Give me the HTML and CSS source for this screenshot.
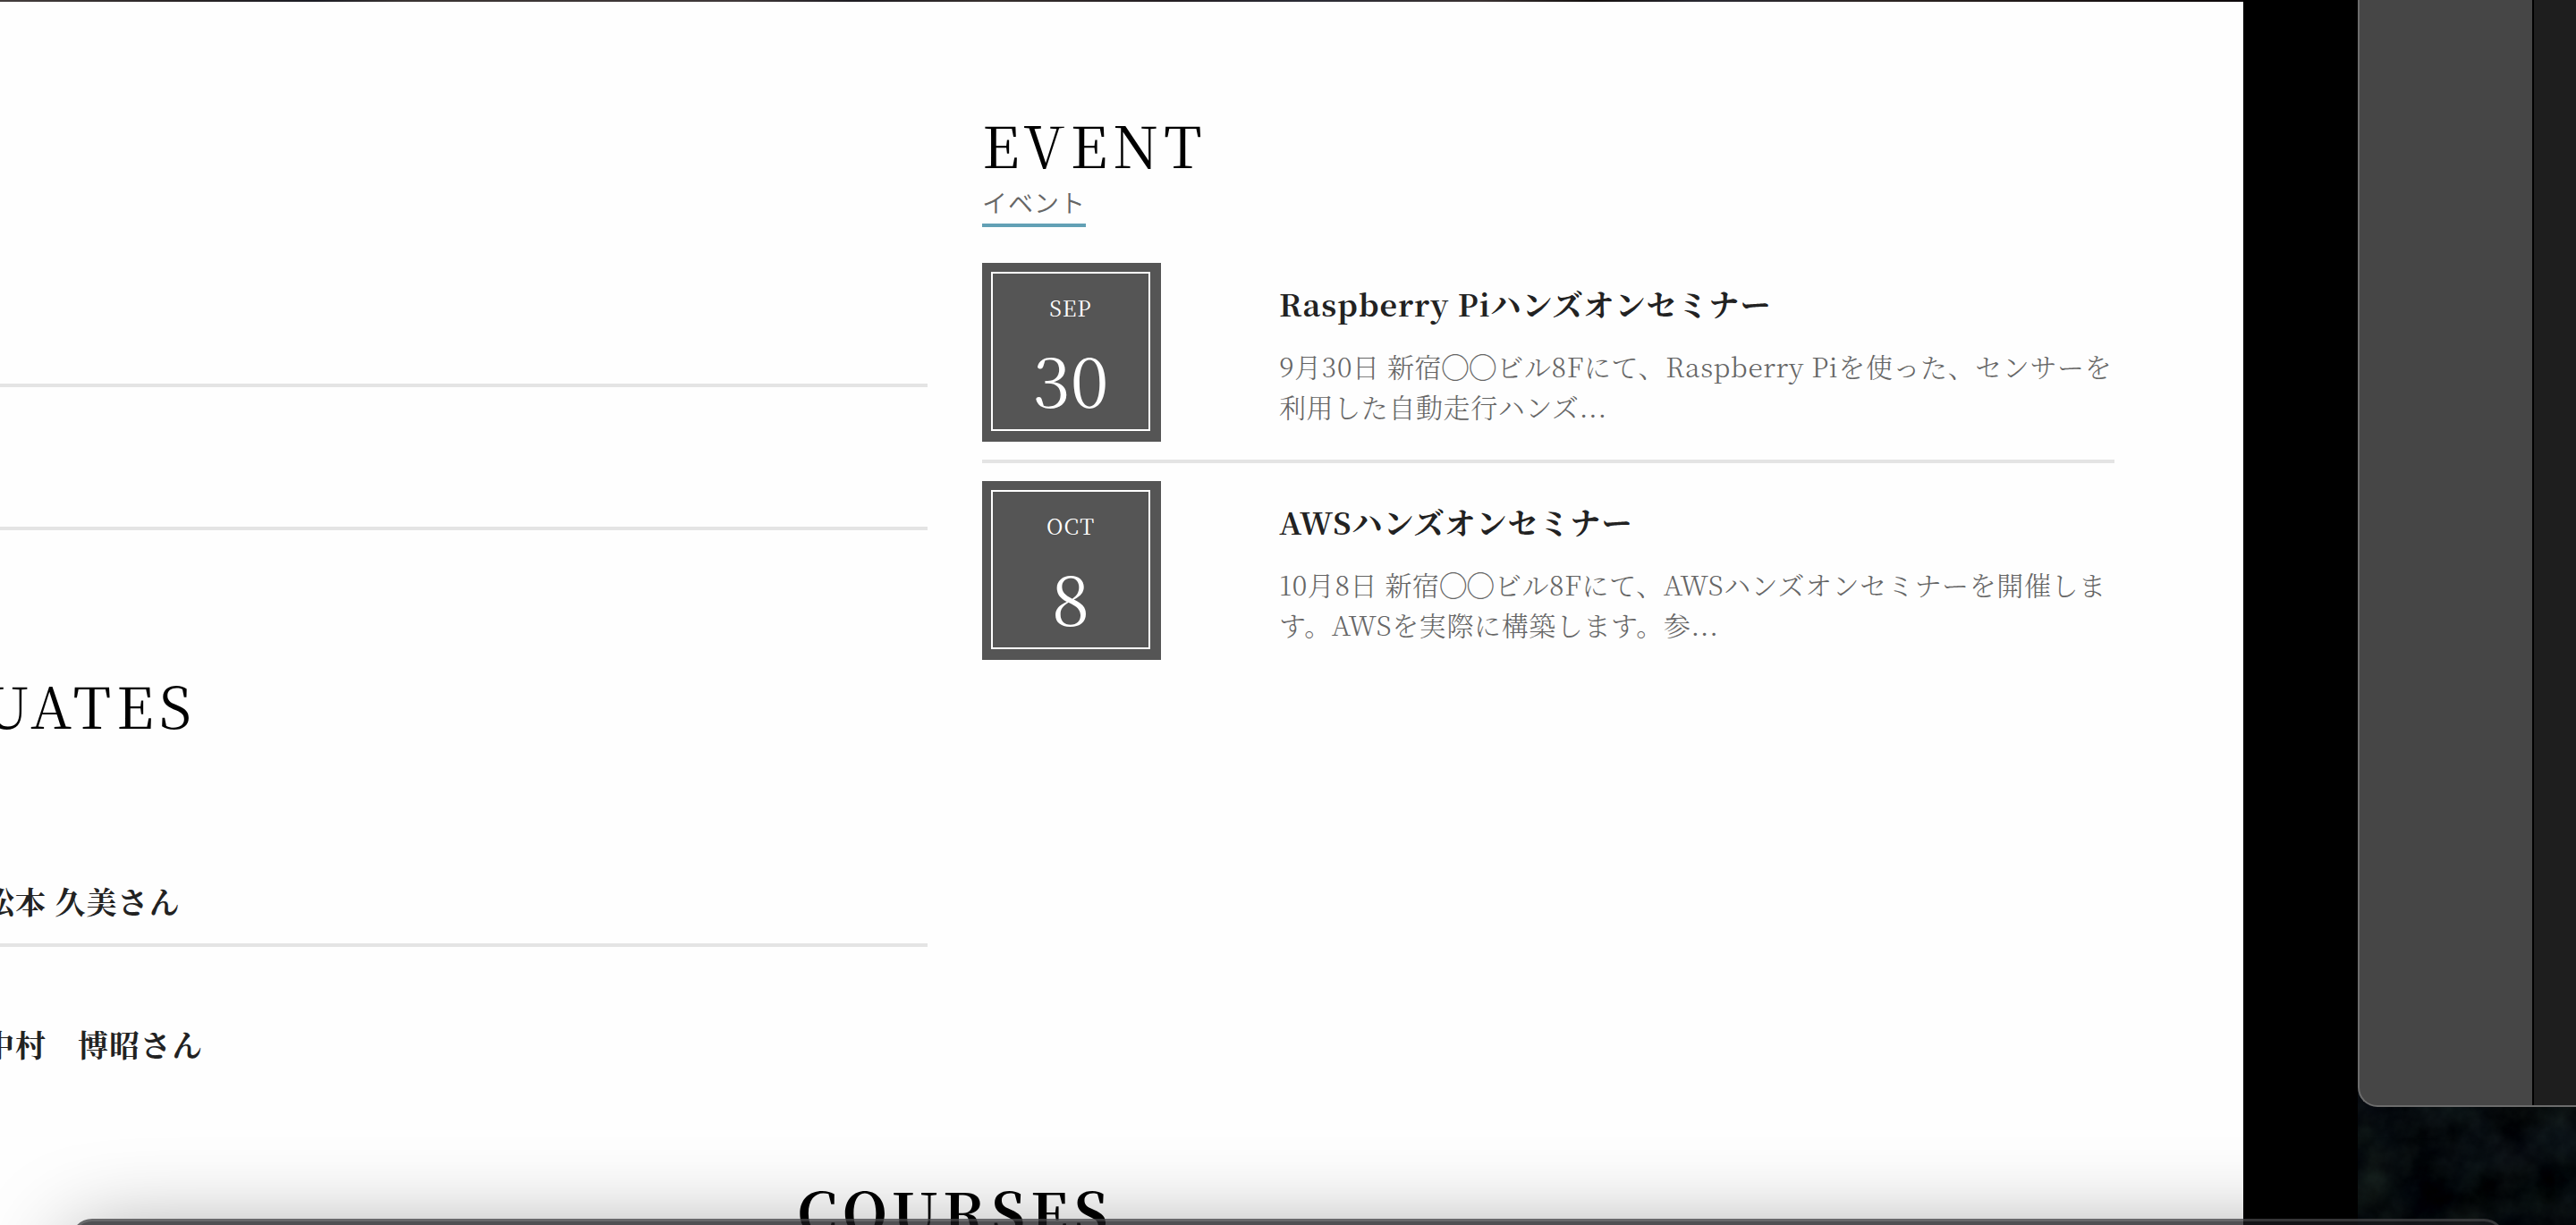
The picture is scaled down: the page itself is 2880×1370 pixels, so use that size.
FILE: index.html
```html
<!DOCTYPE html>
<html lang="ja">
<head>
<meta charset="utf-8">
<title>EVENT</title>
<link rel="stylesheet" href="styles.css">
</head>
<body>
<div class="desktop">
  <svg class="wallpaper" aria-hidden="true">
    <filter id="rock" x="0" y="0" width="100%" height="100%" color-interpolation-filters="sRGB">
      <feTurbulence type="fractalNoise" baseFrequency="0.02" numOctaves="7" seed="4"/>
      <feColorMatrix values="0.02 0.14 0 0 -0.055  0 0.18 0 0 -0.045  0 0.16 0.04 0 -0.045  0 0 0 0 1"/>
    </filter>
    <rect width="100%" height="100%" filter="url(#rock)"/>
  </svg>
  <main class="page">
    <div class="columns">
      <div class="side">
        <ul class="rows news">
          <li></li>
          <li></li>
        </ul>
        <section>
          <h2 class="heading">UATES</h2>
          <ul class="rows people">
            <li>松本 久美さん</li>
            <li>中村　博昭さん</li>
          </ul>
        </section>
      </div>
      <section class="events">
        <h2 class="heading">EVENT</h2>
        <p class="subheading">イベント</p>
        <article class="event">
          <div class="date"><time datetime="09-30"><span class="month">SEP</span><span class="day">30</span></time></div>
          <div class="body">
            <h3 class="title">Raspberry Piハンズオンセミナー</h3>
            <p class="text">9月30日 新宿◯◯ビル8Fにて、Raspberry Piを使った、センサーを利用した自動走行ハンズ...</p>
          </div>
        </article>
        <article class="event">
          <div class="date"><time datetime="10-08"><span class="month">OCT</span><span class="day">8</span></time></div>
          <div class="body">
            <h3 class="title">AWSハンズオンセミナー</h3>
            <p class="text">10月8日 新宿◯◯ビル8Fにて、AWSハンズオンセミナーを開催します。AWSを実際に構築します。参...</p>
          </div>
        </article>
      </section>
    </div>
    <h2 class="heading courses">COURSES</h2>
  </main>
  <div class="gutter"></div>
  <aside class="editor"><div class="panel"></div><div class="pane"></div></aside>
  <div class="front"></div>
</div>
</body>
</html>
```
FILE: styles.css
```css
* { box-sizing: border-box; margin: 0; padding: 0; }

body {
  background: #000;
  font-family: "Noto Serif CJK JP", "Liberation Serif", "Noto Sans CJK JP", serif;
  color: #222;
}

.desktop {
  position: relative;
  display: flex;
  height: 100vh;
  overflow: hidden;
}

.wallpaper {
  position: absolute;
  right: 0;
  bottom: 0;
  width: 244px;
  height: 160px;
}

.page {
  flex: 1;
  padding-top: 2px;
  background:
    linear-gradient(90deg, #453f3e, #2a2526 8%, #1b1c24 14%, #3a3433 18%, #40393a 33%, #1e1c22 38%, #37302e 44%, #241e22 52%, #2b2c36 58%, #3a3232 66%, #14100f 71%, #2a2a33 76%, #2d2523 84%, #0e090b) top / 100% 2px no-repeat,
    #fefefe;
}

.gutter { width: 128px; background: #000; }

.columns {
  display: grid;
  grid-template-columns: 5fr 6fr;
  column-gap: 61px;
  margin-left: -18px;
  padding: 114px 144px 0 0;
}

.heading {
  font-size: 64px;
  line-height: 88px;
  font-weight: 400;
  letter-spacing: 6px;
  color: #000;
}

.rows { list-style: none; }

.rows li {
  height: 160px;
  border-bottom: 4px solid #e4e4e4;
}

.news { padding-top: 157px; margin-bottom: 150px; }

.people li {
  display: flex;
  align-items: flex-end;
  padding-bottom: 23px;
  font-size: 34px;
  line-height: 48px;
  font-weight: 700;
  letter-spacing: 1px;
}

.people { padding-top: 68px; }
.people li:last-child { border-bottom-color: transparent; }

.subheading {
  width: fit-content;
  margin: 2px 0 40px;
  padding-bottom: 4px;
  border-bottom: 4px solid #62a0b5;
  font-family: "Noto Sans CJK JP", sans-serif;
  font-size: 28px;
  line-height: 40px;
  font-weight: 350;
  letter-spacing: 1px;
  color: #666;
}

.event {
  display: flex;
  gap: 132px;
  padding-bottom: 20px;
}

.event + .event {
  border-top: 4px solid #e4e4e4;
  padding-top: 20px;
}

.date {
  flex: none;
  width: 200px;
  height: 200px;
  padding: 10px 12px 12px 10px;
  background: #555;
  color: #fff;
}

.date time {
  display: flex;
  flex-direction: column;
  align-items: center;
  height: 100%;
  padding-top: 14px;
  border: 2px solid #fff;
}

.month { font-size: 24px; line-height: 48px; letter-spacing: 1px; }
.day { font-size: 76px; line-height: 112px; }

.body { flex: 1; padding-top: 20px; }

.title {
  font-size: 34px;
  line-height: 52px;
  font-weight: 700;
  letter-spacing: 1px;
}

.text {
  margin-top: 21px;
  font-size: 30px;
  line-height: 45px;
  font-weight: 300;
  letter-spacing: 0.02em;
  color: #666;
}

.courses {
  width: fit-content;
  margin: 90px auto 0;
  padding-right: 372px;
  box-sizing: content-box;
  font-weight: 700;
}

.editor {
  display: flex;
  width: 244px;
  height: 1238px;
  border: solid #6c6c6c;
  border-width: 0 0 2px 2px;
  border-radius: 0 0 0 22px;
  background: #464646;
  overflow: hidden;
  z-index: 1;
}

.panel { flex: 1; border-right: 2px solid #000; }
.pane { width: 47px; background: #1e1e1e; }

.front {
  position: absolute;
  left: 79px;
  right: 79px;
  top: 1363px;
  height: 600px;
  border-radius: 24px;
  background: rgba(26, 26, 30, .765);
  border: 3px solid rgba(255, 255, 255, .14);
  box-shadow: 0 20px 100px rgba(0, 0, 0, .4);
}
```
